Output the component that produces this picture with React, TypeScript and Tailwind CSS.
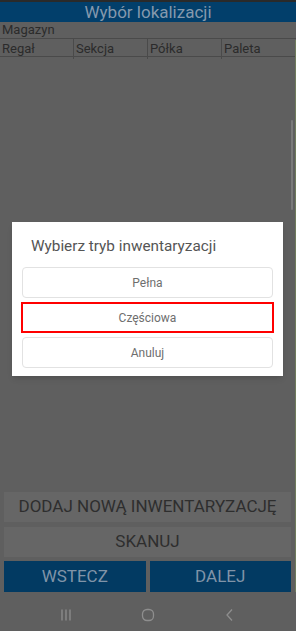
import React from "react";

export default function App() {
  const font = { fontFamily: "Roboto, 'Noto Sans', sans-serif" };
  return (
    <div className="relative w-[296px] h-[631px] overflow-hidden bg-[#5f5f5f]" style={font}>
      <div className="flex flex-col h-full">
        <div className="h-[2px] bg-[#2a2a2a]" />
        <div className="h-[20px] bg-[#023f6b] flex items-center justify-center text-[17px] text-[#8599ad] leading-none">
          Wybór lokalizacji
        </div>
        <div className="h-[17px] flex items-center px-[2px] text-[13px] text-[#2b2b2b] border-b border-[#4a4a4a]">
          Magazyn
        </div>
        <div className="h-[18px] grid grid-cols-4 text-[13px] text-[#2b2b2b] border-b border-[#4a4a4a]">
          <div className="px-[2px] flex items-center border-r border-[#4a4a4a]">Regał</div>
          <div className="px-[2px] flex items-center border-r border-[#4a4a4a]">Sekcja</div>
          <div className="px-[2px] flex items-center border-r border-[#4a4a4a]">Półka</div>
          <div className="px-[2px] flex items-center">Paleta</div>
        </div>
        <div className="flex-1" />
        <div className="flex flex-col gap-[5px] px-[4px] pr-[5px]">
          <div className="h-[30px] bg-[#666666] flex items-center justify-center text-[17px] text-[#2e2e2e]">
            DODAJ NOWĄ INWENTARYZACJĘ
          </div>
          <div className="h-[30px] bg-[#666666] flex items-center justify-center text-[17px] text-[#2e2e2e]">
            SKANUJ
          </div>
          <div className="grid grid-cols-2 gap-[4px] mt-[-1px]">
            <div className="h-[31px] bg-[#023a62] flex items-center justify-center text-[17px] text-[#8094a8]">
              WSTECZ
            </div>
            <div className="h-[31px] bg-[#023a62] flex items-center justify-center text-[17px] text-[#8094a8]">
              DALEJ
            </div>
          </div>
        </div>
        <div className="h-[39px] flex items-center justify-center gap-[68px] pt-[6px] pr-[1px]">
          <svg width="14" height="14" viewBox="0 0 14 14">
            <path d="M3 1.5v11M7 1.5v11M11 1.5v11" stroke="#8e8e8e" strokeWidth="1.3" fill="none" />
          </svg>
          <svg width="14" height="14" viewBox="0 0 14 14">
            <rect x="1.5" y="1.5" width="11" height="11" rx="4.5" stroke="#8e8e8e" strokeWidth="1.3" fill="none" />
          </svg>
          <svg width="14" height="14" viewBox="0 0 14 14">
            <path d="M9 1.5 4 7l5 5.5" stroke="#8e8e8e" strokeWidth="1.3" fill="none" />
          </svg>
        </div>
      </div>

      {/* scrollbar */}
      <div className="absolute left-[291px] top-[120px] w-[2px] h-[90px] bg-[#7a7a7a] rounded-full" />
      <div className="absolute right-0 top-[40px] w-[1px] h-[552px] bg-[#6e7b5c]" />

      {/* dialog */}
      <div className="absolute left-[12px] top-[222px] w-[271px] h-[154px] bg-white shadow-md flex flex-col px-[10px]">
        <div className="pt-[13px] pl-[9px] text-[15.3px] text-[#555555] h-[45px]">
          Wybierz tryb inwentaryzacji
        </div>
        <div className="flex flex-col gap-[4px]">
          <div className="h-[31px] rounded-[4px] border border-[#e2e2e2] flex items-center justify-center text-[12px] text-[#6e6e6e]">
            Pełna
          </div>
          <div className="h-[31px] mx-[-1px] border-2 border-[#ff0000] flex items-center justify-center text-[12px] text-[#6e6e6e]">
            Częściowa
          </div>
          <div className="h-[31px] rounded-[4px] border border-[#e2e2e2] flex items-center justify-center text-[12px] text-[#6e6e6e]">
            Anuluj
          </div>
        </div>
      </div>
    </div>
  );
}
